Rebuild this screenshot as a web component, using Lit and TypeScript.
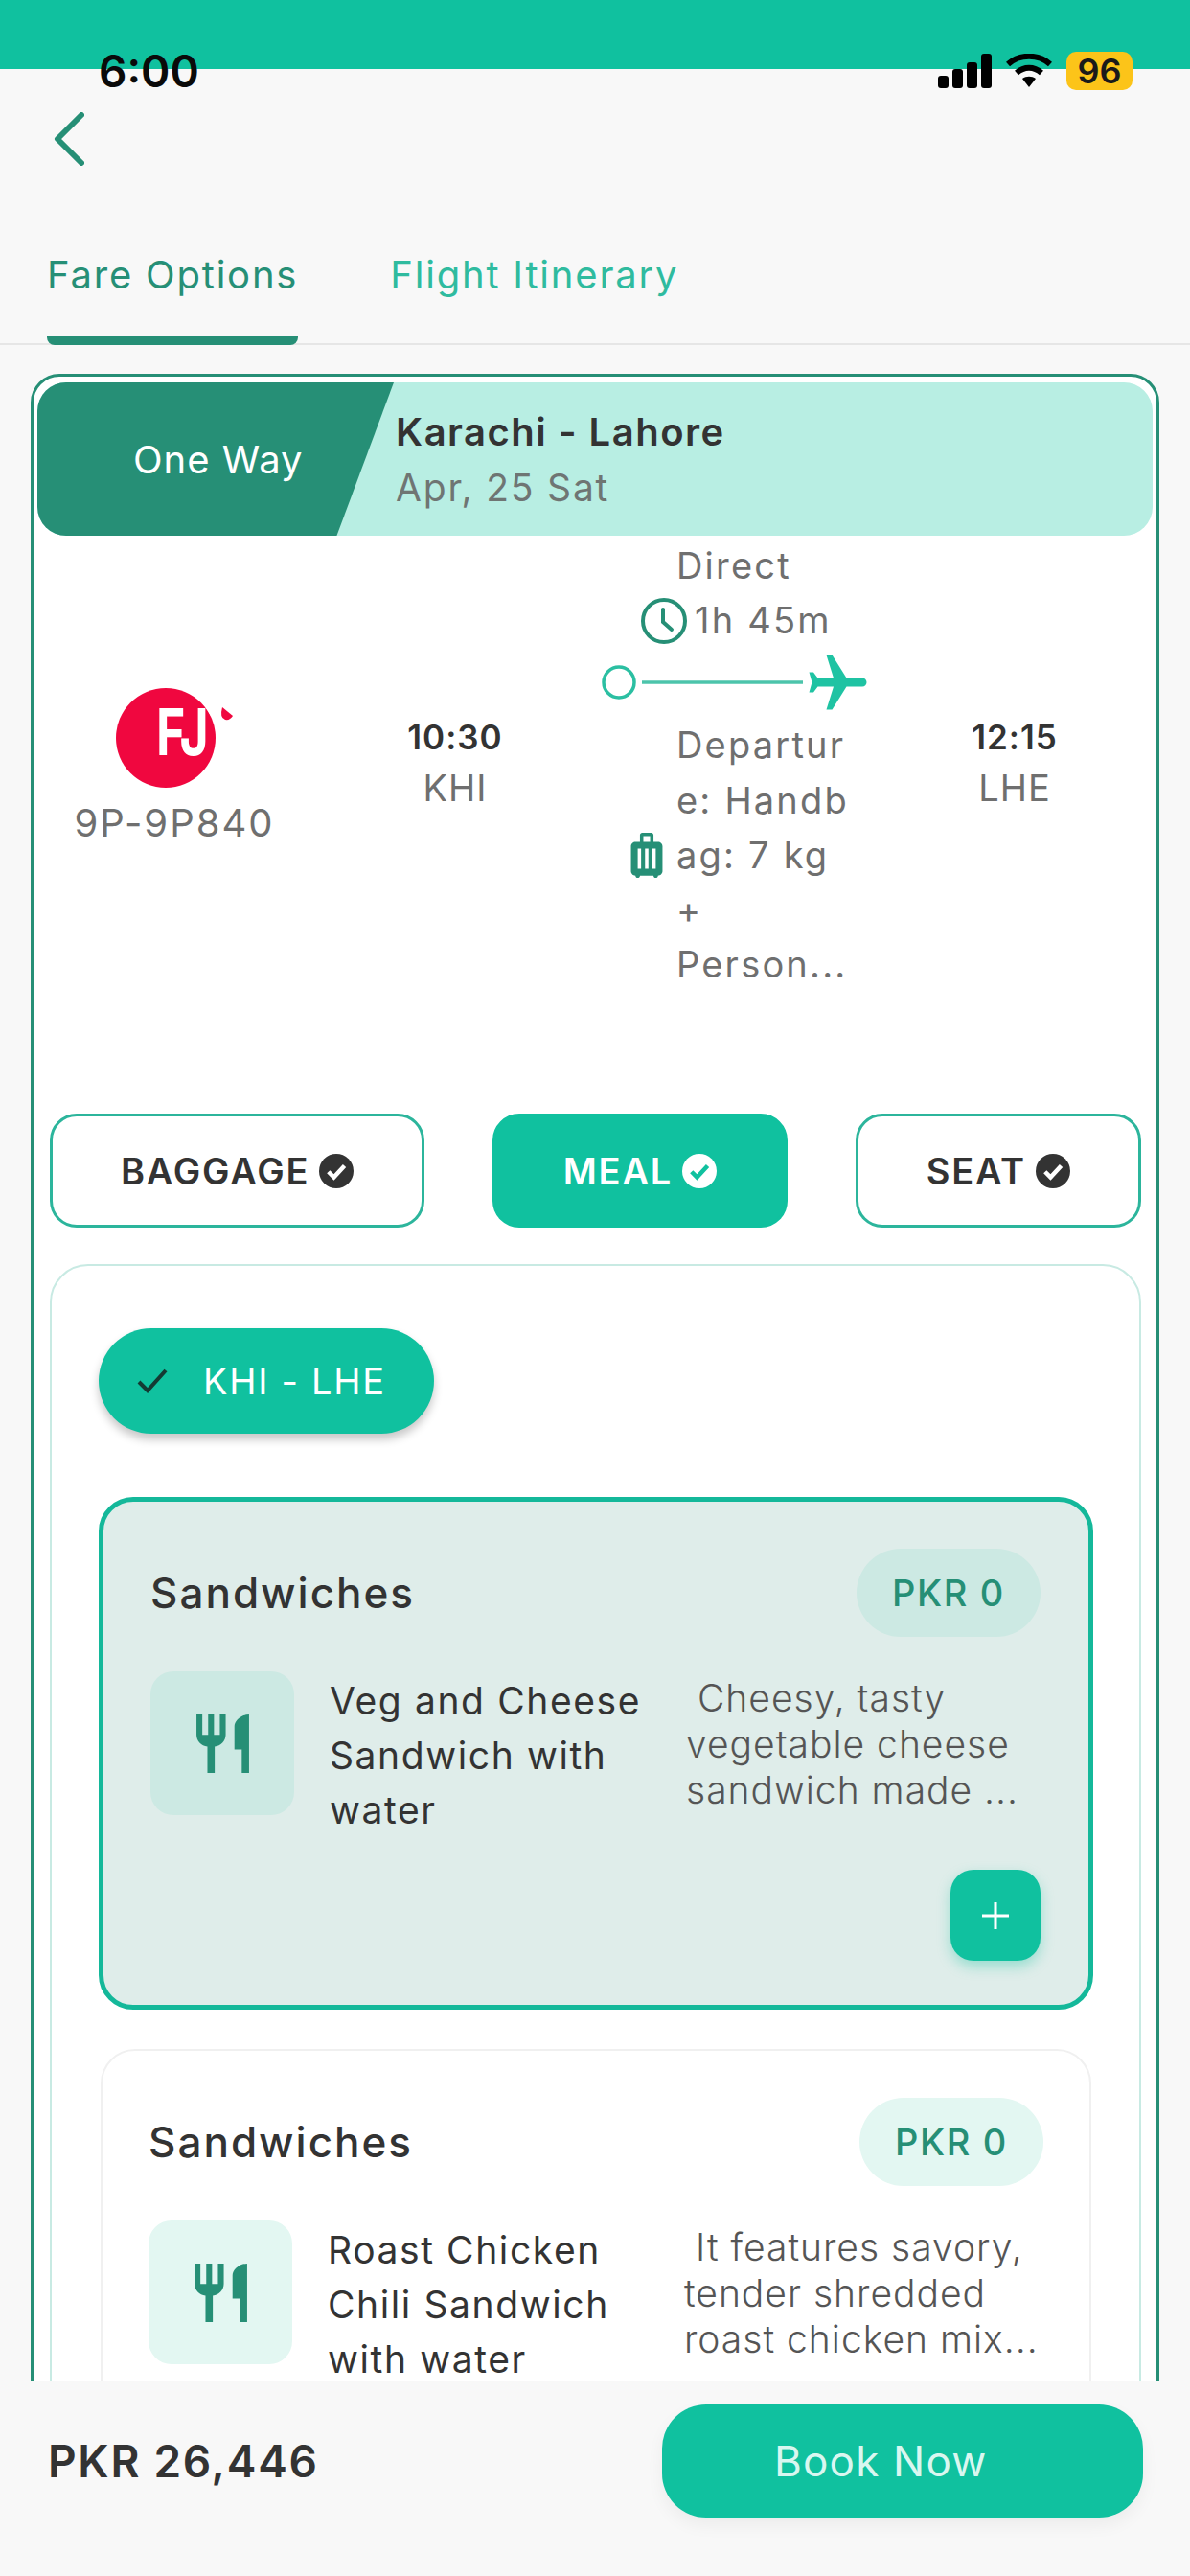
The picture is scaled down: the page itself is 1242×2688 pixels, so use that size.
import { LitElement, html, css, svg } from 'lit';
import { customElement } from 'lit/decorators.js';
import { classMap } from 'lit/directives/class-map.js';

const addons = [
  { label: 'BAGGAGE', active: false },
  { label: 'MEAL', active: true },
  { label: 'SEAT', active: false },
];

const meals = [
  {
    name: 'Veg and Cheese Sandwich with water',
    desc: ' Cheesy, tasty vegetable cheese sandwich made ...',
    selected: true,
  },
  {
    name: 'Roast Chicken Chili Sandwich with water',
    desc: ' It features savory, tender shredded roast chicken mix...',
    selected: false,
  },
];

const checkBadge = svg`<svg class="badge" viewBox="0 0 24 24">
  <circle class="badge-disc" cx="12" cy="12" r="12"></circle>
  <path class="badge-tick" d="M6.5 12.5l3.8 3.8 7.4-8"></path>
</svg>`;

const forkKnife = svg`<svg class="fork" viewBox="3 2 18 20">
  <path d="M11 9H9V2H7v7H5V2H3v7c0 2.12 1.66 3.84 3.75 3.97V22h2.5v-9.03C11.34 12.84 13 11.12 13 9V2h-2v7zm5-3v8h2.5v8H21V2c-2.76 0-5 2.24-5 4z"></path>
</svg>`;

@customElement('app-root')
export default class AppRoot extends LitElement {
  static styles = css`
    :host {
      display: block;
      font-family: Inter, 'Liberation Sans', sans-serif;
      color: #333;
    }

    .page {
      position: relative;
      display: flex;
      flex-direction: column;
      width: 1242px;
      height: 2688px;
      overflow: hidden;
      background: #f8f8f8;
    }

    .band {
      flex: none;
      height: 72px;
      background: #10c19f;
    }

    .status {
      position: absolute;
      top: 54px;
      left: 103px;
      right: 60px;
      display: flex;
      align-items: center;
      height: 40px;
    }

    .time {
      flex: 1;
      font-size: 46px;
      font-weight: 600;
      line-height: 40px;
      color: #0a0a0a;
    }

    .signal {
      width: 56px;
      height: 36px;
      margin-right: 15px;
    }

    .wifi {
      width: 48px;
      height: 36px;
      margin-right: 15px;
    }

    .battery {
      width: 69px;
      height: 40px;
      border-radius: 10px;
      background: #fcc419;
      font-size: 36px;
      font-weight: 600;
      line-height: 40px;
      text-align: center;
      color: #1a1a1a;
    }

    .nav {
      flex: none;
      padding: 45px 0 0 56px;
      line-height: 0;
    }

    .back {
      width: 32px;
      height: 56px;
      fill: none;
      stroke: #268f76;
      stroke-width: 6;
      stroke-linecap: round;
      stroke-linejoin: round;
    }

    .tabs {
      flex: none;
      display: flex;
      gap: 96px;
      margin-top: 91px;
      padding-left: 49px;
      box-shadow: inset 0 -2px 0 #e6e6e6;
    }

    .tab {
      padding-bottom: 41px;
      border-bottom: 9px solid transparent;
      font-size: 40px;
      line-height: 46px;
      letter-spacing: 1.8px;
      color: #2fbb9f;
    }

    .tab.active {
      border-bottom-color: #268f76;
      border-radius: 0 0 8px 8px;
      color: #268f76;
    }

    .scroll {
      flex: 1;
      min-height: 0;
      overflow: hidden;
      padding: 30px 32px 0;
    }

    .card {
      padding: 6px;
      border: 3px solid #268f76;
      border-radius: 30px;
      background: #fff;
    }

    .route-head {
      display: flex;
      height: 160px;
      margin: 0 -2px;
      overflow: hidden;
      border-radius: 30px;
      background: #b8eee3;
    }

    .way {
      display: flex;
      align-items: center;
      width: 372px;
      padding-left: 100px;
      box-sizing: border-box;
      clip-path: polygon(0 0, 100% 0, 84% 100%, 0 100%);
      background: #268f76;
      font-size: 40px;
      letter-spacing: 1px;
      color: #fff;
    }

    .cities {
      display: flex;
      flex-direction: column;
      gap: 12px;
      padding: 1px 0 0 2px;
      justify-content: center;
    }

    .cities b {
      font-size: 40px;
      font-weight: 600;
      line-height: 46px;
      letter-spacing: 1.5px;
    }

    .cities span {
      font-size: 39px;
      line-height: 46px;
      letter-spacing: 1.8px;
      color: #6f7573;
    }

    .flight {
      display: grid;
      grid-template-columns: 282px 304px 292px 280px;
      align-items: center;
      padding-top: 3px;
      margin-bottom: 127px;
    }

    .airline {
      display: flex;
      flex-direction: column;
      align-items: center;
      gap: 10px;
      font-size: 40px;
      line-height: 48px;
      letter-spacing: 2px;
      color: #6f6f6f;
    }

    .logo {
      width: 130px;
      height: 110px;
      margin-left: -8px;
    }

    .logo text {
      font-family: Inter, 'Liberation Sans', sans-serif;
      font-size: 68px;
      font-weight: 700;
      letter-spacing: -3px;
      fill: #fff;
    }

    .stop {
      display: flex;
      flex-direction: column;
      align-items: center;
      gap: 11px;
      padding-bottom: 3px;
    }

    .stop b {
      font-size: 35px;
      font-weight: 600;
      line-height: 38px;
      letter-spacing: 1px;
    }

    .stop span {
      font-size: 38px;
      line-height: 46px;
      letter-spacing: 1px;
      color: #6f6f6f;
    }

    .leg {
      font-size: 38px;
      line-height: 57.2px;
      letter-spacing: 2.2px;
      color: #6f6f6f;
    }

    .leg-row {
      display: flex;
      align-items: center;
    }

    .direct {
      padding-left: 79px;
    }

    .clock {
      width: 52px;
      height: 52px;
      margin-left: 40px;
      margin-right: 6px;
      fill: none;
      stroke: #268f76;
      stroke-width: 4;
      stroke-linecap: round;
    }

    .path {
      display: block;
      width: 292px;
      height: 73px;
    }

    .bag {
      flex: none;
      width: 34px;
      height: 47px;
      margin-left: 31px;
      margin-right: 14px;
      fill: #268f76;
    }

    .addons {
      display: flex;
      justify-content: space-between;
      margin: 0 10px 38px 11px;
    }

    .addon {
      display: flex;
      align-items: center;
      gap: 10px;
      box-sizing: border-box;
      height: 119px;
      padding: 0 71px;
      border: 3px solid #2cb59c;
      border-radius: 28px;
      font-size: 38px;
      font-weight: 600;
      letter-spacing: 1.8px;
      color: #333;
    }

    .addon.active {
      background: #10c19f;
      border-color: #10c19f;
      color: #fff;
    }

    .badge {
      width: 36px;
      height: 36px;
    }

    .badge-disc {
      fill: #333;
    }

    .badge-tick {
      fill: none;
      stroke: #fff;
      stroke-width: 3;
    }

    .addon.active .badge-disc {
      fill: #fff;
    }

    .addon.active .badge-tick {
      stroke: #10c19f;
    }

    .panel {
      margin: 0 10px 0 11px;
      padding: 65px 48px 0 49px;
      border: 2px solid #c8eae3;
      border-radius: 40px;
    }

    .chip {
      display: flex;
      align-items: center;
      gap: 35px;
      box-sizing: border-box;
      width: 350px;
      height: 110px;
      padding-left: 38px;
      border-radius: 55px;
      background: #10c19f;
      box-shadow: 0 6px 10px rgba(0, 0, 0, 0.22);
      font-size: 38px;
      letter-spacing: 1.7px;
      color: #fff;
    }

    .chip svg {
      width: 36px;
      height: 30px;
      fill: none;
      stroke: #143a33;
      stroke-width: 4;
    }

    .meals {
      display: flex;
      flex-direction: column;
      gap: 41px;
      margin-top: 66px;
    }

    .meal {
      padding: 49px 48px 46px;
      margin: 0 2px;
      border: 2px solid #f0f0f0;
      border-radius: 36px;
      background: #fff;
    }

    .meal.selected {
      padding: 49px 50px 46px 49px;
      margin: 0;
      border: 5px solid #14b89a;
      background: #dfedea;
    }

    .meal-head {
      display: flex;
      align-items: center;
      justify-content: space-between;
      margin-bottom: 36px;
      font-size: 44px;
      font-weight: 500;
      letter-spacing: 2px;
    }

    .price {
      display: flex;
      align-items: center;
      justify-content: center;
      width: 192px;
      height: 92px;
      border-radius: 46px;
      background: #e3f7f2;
      font-size: 38px;
      font-weight: 500;
      letter-spacing: 1.6px;
      color: #268f76;
    }

    .meal.selected .price {
      background: #cce9e3;
    }

    .meal-body {
      display: grid;
      grid-template-columns: 150px 335px 1fr;
      column-gap: 37px;
    }

    .tile {
      display: flex;
      align-items: center;
      justify-content: center;
      height: 150px;
      border-radius: 24px;
      background: #e3f7f2;
    }

    .meal.selected .tile {
      background: #cce9e3;
    }

    .fork {
      width: 57px;
      height: 61px;
      fill: #268f76;
    }

    .meal-name {
      padding-top: 2px;
      font-size: 39px;
      line-height: 57px;
      letter-spacing: 1.6px;
    }

    .meal-desc {
      padding-top: 4px;
      font-size: 39px;
      font-weight: 300;
      line-height: 48px;
      letter-spacing: 1px;
      white-space: pre-wrap;
      color: #555;
    }

    .add-row {
      display: flex;
      justify-content: flex-end;
      margin-top: 34px;
    }

    .add {
      display: flex;
      align-items: center;
      justify-content: center;
      width: 94px;
      height: 95px;
      border-radius: 24px;
      background: #10c19f;
      box-shadow: 0 6px 14px rgba(16, 193, 159, 0.35);
    }

    .add svg {
      width: 30px;
      height: 30px;
      stroke: #fff;
      stroke-width: 3;
    }

    .footer {
      flex: none;
      display: flex;
      align-items: center;
      justify-content: space-between;
      height: 204px;
      box-sizing: border-box;
      padding: 25px 49px 61px 50px;
      background: #f8f8f8;
    }

    .total {
      font-size: 46px;
      font-weight: 600;
      letter-spacing: 1.7px;
    }

    .book {
      display: flex;
      align-items: center;
      box-sizing: border-box;
      width: 502px;
      height: 118px;
      padding-left: 117px;
      border-radius: 46px;
      background: #10c19f;
      box-shadow: 0 8px 18px rgba(0, 0, 0, 0.05);
      font-size: 44px;
      letter-spacing: 1.2px;
      color: #d9f7f0;
    }
  `;

  renderStatus() {
    return html`
      <div class="status">
        <span class="time">6:00</span>
        <svg class="signal" viewBox="0 0 56 36">
          <rect x="0" y="23" width="11" height="13" rx="3"></rect>
          <rect x="15" y="16" width="11" height="20" rx="3"></rect>
          <rect x="30" y="9" width="11" height="27" rx="3"></rect>
          <rect x="45" y="0" width="11" height="36" rx="3"></rect>
        </svg>
        <svg class="wifi" viewBox="0 0 48 36">
          <path d="M2 11C14 0 34 0 46 11" fill="none" stroke="#000" stroke-width="6"></path>
          <path d="M11 20c8-7 18-7 26 0" fill="none" stroke="#000" stroke-width="6"></path>
          <path d="M17 26c4-3 10-3 14 0l-7 9z"></path>
        </svg>
        <span class="battery">96</span>
      </div>
    `;
  }

  renderFlight() {
    return html`
      <div class="flight">
        <div class="airline">
          <svg class="logo" viewBox="0 0 130 110">
            <circle cx="60" cy="55" r="52" fill="#f0073f"></circle>
            <path d="M100 20l7 12 9-4V14z" fill="#fff"></path>
            <path d="M119 23l11 9q-3 5-8 4-6-2-3-13z" fill="#f0073f"></path>
            <text transform="translate(50 73) scale(.76 1)">FJ</text>
          </svg>
          <span>9P-9P840</span>
        </div>
        <div class="stop"><b>10:30</b><span>KHI</span></div>
        <div class="leg">
          <div class="direct">Direct</div>
          <div class="leg-row">
            <svg class="clock" viewBox="0 0 52 52">
              <circle cx="26" cy="26" r="22"></circle>
              <path d="M25 14v13l9 8"></path>
            </svg>
            1h 45m
          </div>
          <svg class="path" viewBox="0 0 292 73">
            <circle cx="19" cy="36" r="16" fill="#fff" stroke="#2bbfa2" stroke-width="3.5"></circle>
            <path d="M43 36h168" stroke="#4cc4ab" stroke-width="3.5"></path>
            <path
              fill="#1fc3a3"
              transform="translate(283.5 1.5) rotate(90) scale(3)"
              d="M21 16v-2l-8-5V3.5c0-.83-.67-1.5-1.5-1.5S10 2.67 10 3.5V9l-8 5v2l8-2.5V19l-2 1.5V22l3.5-1 3.5 1v-1.5L13 19v-5.5l8 2.5z"
            ></path>
          </svg>
          <div class="leg-row">
            <svg class="bag" viewBox="5 2 14 20">
              <path d="M17 6h-2V3c0-.55-.45-1-1-1h-4c-.55 0-1 .45-1 1v3H7c-1.1 0-2 .9-2 2v11c0 1.1.9 2 2 2 0 .55.45 1 1 1s1-.45 1-1h6c0 .55.45 1 1 1s1-.45 1-1c1.1 0 2-.9 2-2V8c0-1.1-.9-2-2-2zM9.5 18H8V9h1.5v9zm3.25 0h-1.5V9h1.5v9zm.75-12h-3V3.5h3V6zM16 18h-1.5V9H16v9z"></path>
            </svg>
            <div>Departur<br />e: Handb<br />ag: 7 kg<br />+<br />Person...</div>
          </div>
        </div>
        <div class="stop"><b>12:15</b><span>LHE</span></div>
      </div>
    `;
  }

  renderMeal(meal: (typeof meals)[number]) {
    return html`
      <div class=${classMap({ meal: true, selected: meal.selected })}>
        <div class="meal-head">
          <span>Sandwiches</span>
          <span class="price">PKR 0</span>
        </div>
        <div class="meal-body">
          <div class="tile">${forkKnife}</div>
          <div class="meal-name">${meal.name}</div>
          <div class="meal-desc">${meal.desc}</div>
        </div>
        <div class="add-row">
          <div class="add">
            <svg viewBox="0 0 30 30"><path d="M15 1v28M1 15h28"></path></svg>
          </div>
        </div>
      </div>
    `;
  }

  render() {
    return html`
      <div class="page">
        <div class="band"></div>
        ${this.renderStatus()}
        <div class="nav">
          <svg class="back" viewBox="0 0 32 56"><path d="M29 3L4 28l25 25"></path></svg>
        </div>
        <div class="tabs">
          <div class="tab active">Fare Options</div>
          <div class="tab">Flight Itinerary</div>
        </div>
        <div class="scroll">
          <div class="card">
            <div class="route-head">
              <div class="way">One Way</div>
              <div class="cities">
                <b>Karachi - Lahore</b>
                <span>Apr, 25 Sat</span>
              </div>
            </div>
            ${this.renderFlight()}
            <div class="addons">
              ${addons.map(
                (a) => html`<div class=${classMap({ addon: true, active: a.active })}>
                  ${a.label}${checkBadge}
                </div>`,
              )}
            </div>
            <div class="panel">
              <div class="chip">
                <svg viewBox="0 0 36 30"><path d="M4 16l9 9L32 4"></path></svg>
                KHI - LHE
              </div>
              <div class="meals">${meals.map((m) => this.renderMeal(m))}</div>
            </div>
          </div>
        </div>
        <div class="footer">
          <span class="total">PKR 26,446</span>
          <div class="book">Book Now</div>
        </div>
      </div>
    `;
  }
}
